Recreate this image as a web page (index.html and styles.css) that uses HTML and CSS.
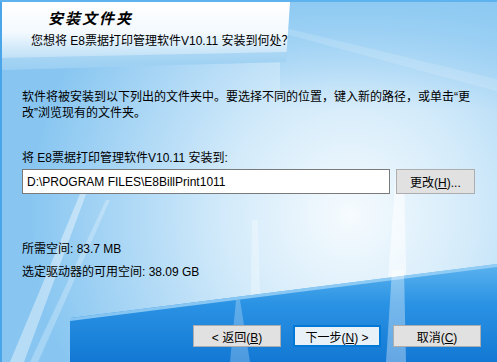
FILE: index.html
```html
<!DOCTYPE html>
<html lang="zh-CN">
<head>
  <meta charset="UTF-8" />
  <title>安装文件夹</title>
  <link rel="stylesheet" href="styles.css">
</head>
<body>

  <div class="wizard">
    <svg class="backdrop" viewBox="0 0 497 362" width="497" height="362">
      <defs>
        <radialGradient id="sky" cx="350" cy="215" r="320" gradientUnits="userSpaceOnUse">
          <stop offset="0" stop-color="#f6fbfe"/>
          <stop offset="0.4" stop-color="#d2eafa"/>
          <stop offset="1" stop-color="#88c6f1"/>
        </radialGradient>
        <linearGradient id="topshade" x1="0" y1="0" x2="0" y2="1">
          <stop offset="0" stop-color="#8ac8f2" stop-opacity="0.9"/>
          <stop offset="1" stop-color="#8ac8f2" stop-opacity="0"/>
        </linearGradient>
        <linearGradient id="panel" x1="0" y1="0" x2="0" y2="1">
          <stop offset="0" stop-color="#ffffff"/>
          <stop offset="0.45" stop-color="#f3f9fe"/>
          <stop offset="0.7" stop-color="#cfe8f9"/>
          <stop offset="1" stop-color="#a9d6f5"/>
        </linearGradient>
        <linearGradient id="wedge" x1="0" y1="0" x2="0" y2="1">
          <stop offset="0" stop-color="#5cb3ee"/>
          <stop offset="0.4" stop-color="#2b93e4"/>
          <stop offset="1" stop-color="#1278d4"/>
        </linearGradient>
      </defs>
      <rect width="497" height="362" fill="url(#sky)"/>
      <rect x="280" width="217" height="110" fill="url(#topshade)"/>
      <!-- light streaks -->
      <polygon points="10,362 24,362 95,170 90,170" fill="#ffffff" opacity="0.4"/>
      <polygon points="30,362 38,362 110,200 106,200" fill="#ffffff" opacity="0.25"/>
      <polygon points="382,362 408,362 404,170 396,170" fill="#ffffff" opacity="0.55"/>
      <polygon points="250,362 262,362 258,220 252,220" fill="#ffffff" opacity="0.3"/>
      <polygon points="160,0 170,0 500,80 500,92" fill="#ffffff" opacity="0.15"/>
      <!-- header panel -->
      <polygon points="0,2 290,2 286,62 0,70" fill="url(#panel)"/>
      <polygon points="0,58 287,52 286,62 0,70" fill="#8cc8f0" opacity="0.5"/>
      <!-- bottom wedge -->
      <polygon points="70,318 497,264 497,362 70,362" fill="url(#wedge)"/>
      <polygon points="70,318 497,264 497,267 70,321" fill="#9fd3f6" opacity="0.8"/>
      <polygon points="230,362 250,362 240,300 236,300" fill="#ffffff" opacity="0.25"/>
      <polygon points="386,362 406,362 404,270 392,270" fill="#ffffff" opacity="0.35"/>
      <rect x="0" y="0" width="2" height="362" fill="#4aa6e8"/>
      <rect x="0" y="0" width="497" height="2" fill="#5eb3ee"/>
    </svg>

    <div class="head">
      <div class="title">安装文件夹</div>
      <div class="subtitle">您想将 E8票据打印管理软件V10.11 安装到何处？</div>
    </div>

    <div class="content">
      <p class="intro">软件将被安装到以下列出的文件夹中。要选择不同的位置，键入新的路径，或单击“更<br>改”浏览现有的文件夹。</p>

      <div class="label">将 E8票据打印管理软件V10.11 安装到:</div>
      <div class="path-row">
        <input class="path" type="text" value="D:\PROGRAM FILES\E8BillPrint1011">
        <button class="btn">更改(<u>H</u>)...</button>
      </div>

      <div class="space">所需空间: 83.7 MB</div>
      <div class="space">选定驱动器的可用空间: 38.09 GB</div>
    </div>

    <div class="actions">
      <button class="btn">&lt; 返回(<u>B</u>)</button>
      <button class="btn default">下一步(<u>N</u>) &gt;</button>
      <button class="btn">取消(<u>C</u>)</button>
    </div>
  </div>

</body>
</html>
```

FILE: styles.css
```css
body {
  margin: 0;
  font-family: 'Liberation Sans', 'Noto Sans CJK SC', sans-serif;
  font-size: 12px;
  color: #000;
}

.wizard {
  position: relative;
  width: 497px;
  height: 362px;
  overflow: hidden;
}

.backdrop {
  position: absolute;
  left: 0;
  top: 0;
}

.head,
.content,
.actions {
  position: relative;
}

.head {
  height: 70px;
  padding-top: 8px;
  box-sizing: border-box;
}

.title {
  padding-left: 48px;
  font-family: 'Noto Sans CJK SC', sans-serif;
  font-size: 15px;
  font-weight: bold;
  font-style: italic;
  letter-spacing: 2px;
  line-height: 20px;
}

.subtitle {
  padding-left: 31px;
  margin-top: 5px;
  line-height: 16px;
}

.content {
  padding: 19px 22px 0 22px;
}

.intro {
  margin: 0;
  line-height: 16px;
}

.label {
  margin-top: 29px;
  line-height: 16px;
}

.path-row {
  display: flex;
  gap: 6px;
  margin-top: 3px;
}

.path {
  width: 372px;
  height: 25px;
  box-sizing: border-box;
  border: 1px solid #7a7a7a;
  padding: 0 4px;
  font-family: inherit;
  font-size: 12px;
  background: #fff;
  color: #000;
}

.btn {
  height: 25px;
  width: 80px;
  box-sizing: border-box;
  border: 1px solid #adadad;
  background: #e1e1e1;
  font-family: inherit;
  font-size: 12px;
  color: #000;
  padding: 0;
}

.space {
  margin-top: 7px;
  line-height: 16px;
}

.path-row + .space {
  margin-top: 47px;
}

.actions {
  display: flex;
  gap: 12px;
  padding: 45px 0 0 193px;
}

.actions .btn {
  width: 88px;
  height: 22px;
}

.actions .btn.default {
  border: 2px solid #0078d7;
  background: #e8f0f8;
}
```
